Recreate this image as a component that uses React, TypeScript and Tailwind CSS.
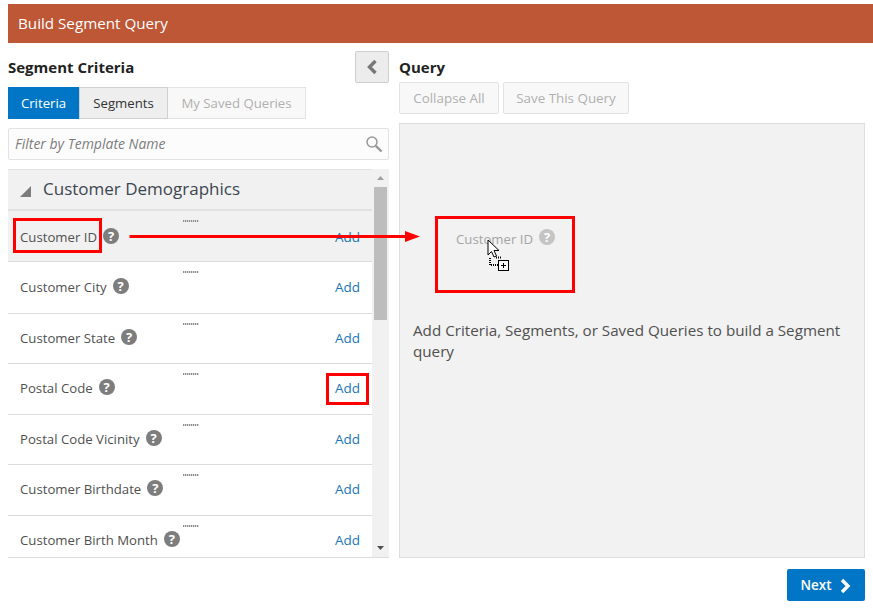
import React from "react";

function Help({ faded = false }: { faded?: boolean }) {
  return (
    <span
      className={`inline-flex h-4 w-4 items-center justify-center rounded-full text-[13px] font-bold leading-none text-white ${
        faded ? "bg-[#c4c4c4]" : "bg-[#7d7d7d]"
      }`}
    >
      ?
    </span>
  );
}

const rows: { name: string; h: string; mt: string; first?: boolean }[] = [
  { name: "Customer ID", h: "h-[51px]", mt: "mt-[16px]", first: true },
  { name: "Customer City", h: "h-[52px]", mt: "mt-[15px]" },
  { name: "Customer State", h: "h-[50px]", mt: "mt-[14px]" },
  { name: "Postal Code", h: "h-[51px]", mt: "mt-[14px]" },
  { name: "Postal Code Vicinity", h: "h-[50px]", mt: "mt-[14px]" },
  { name: "Customer Birthdate", h: "h-[51px]", mt: "mt-[14px]" },
  { name: "Customer Birth Month", h: "h-[42px]", mt: "mt-[14px]" },
];

function Row({ name, h, mt, first, last }: { name: string; h: string; mt: string; first?: boolean; last: boolean }) {
  return (
    <div
      className={`relative flex ${h} shrink-0 items-start pl-3 pr-3 ${last ? "" : "border-b border-[#dcdcdc]"} ${
        first ? "bg-[#f1f1f1]" : "bg-white"
      }`}
    >
      <div className="absolute left-[175px] top-[9px] h-[2px] w-4 bg-[repeating-linear-gradient(90deg,#8f8f8f_0_1px,#d8d8d8_1px_2px)]" />
      <div className={`${mt} flex items-center gap-[6px] text-[13.2px] leading-[20px] text-[#505050]`}>
        <span>{name}</span>
        <span className="-mt-[2px] flex">
          <Help />
        </span>
      </div>
      <a className={`ml-auto ${mt} text-[13.5px] leading-[20px] text-[#1b75b5]`}>Add</a>
    </div>
  );
}

function RedBox({ className }: { className: string }) {
  return <div className={`pointer-events-none absolute border-[3px] border-[#ff0000] ${className}`} />;
}

export default function App() {
  return (
    <div
      className="relative h-[613px] w-[873px] overflow-hidden bg-white pl-2 pt-1"
      style={{ fontFamily: '"Open Sans", "Noto Sans", sans-serif' }}
    >
      <div className="flex h-[39px] items-center bg-[#bd5736] pl-[10px] text-[15.2px] text-white">Build Segment Query</div>

      <div className="flex">
        {/* Left column */}
        <div className="w-[381px] shrink-0">
          <div className="mt-2 flex h-8 items-start justify-between">
            <div className="mt-[6px] text-[15px] font-bold leading-5 text-[#222]">Segment Criteria</div>
            <button className="flex h-8 w-[34px] items-center justify-center rounded-[2px] border border-[#cfcfcf] bg-[#ececec]">
              <svg width="12" height="16" viewBox="0 0 12 16">
                <path d="M9.5 2 L3.5 8 L9.5 14" fill="none" stroke="#777" strokeWidth="3.4" />
              </svg>
            </button>
          </div>

          <div className="mt-1 flex h-8 text-[13.2px]">
            <div className="flex w-[71px] items-center justify-center bg-[#0276c6] pt-[1px] text-white">Criteria</div>
            <div className="flex w-[89px] items-center justify-center border border-[#d0d0d0] bg-[#eeeeee] pt-[1px] text-[#333]">Segments</div>
            <div className="flex w-[138px] items-center justify-center border border-l-0 border-[#e4e4e4] bg-[#f8f8f8] pt-[1px] text-[#b0b0b0]">My Saved Queries</div>
          </div>

          <div className="mt-[9px] flex h-8 items-center justify-between rounded-[2px] border border-[#e2e2e2] bg-[#fcfcfc] pl-[6px] pr-[5px]">
            <span className="-mt-[2px] text-[14px] italic text-[#7d7d7d]">Filter by Template Name</span>
            <svg width="18" height="18" viewBox="0 0 18 18">
              <circle cx="7" cy="7" r="5" fill="none" stroke="#999" strokeWidth="1.5" />
              <path d="M10.8 10.8 L16.5 16.5" stroke="#999" strokeWidth="2.4" />
            </svg>
          </div>

          <div className="mt-[9px] flex h-[389px] overflow-hidden border-b border-[#dcdcdc]">
            <div className="flex w-[364px] shrink-0 flex-col">
              <div className="flex h-[42px] shrink-0 items-center border-b-2 border-t border-[#e2e2e2] bg-[#f1f1f1] pl-3">
                <svg width="11" height="11" viewBox="0 0 11 11" className="mt-1">
                  <path d="M11 0 V11 H0 Z" fill="#7c7c7c" />
                </svg>
                <span className="-mt-[2px] ml-3 text-[17px] text-[#3c4650]">Customer Demographics</span>
              </div>
              {rows.map((r, i) => (
                <Row key={r.name} name={r.name} h={r.h} mt={r.mt} first={r.first} last={i === rows.length - 1} />
              ))}
            </div>
            <div className="flex w-[17px] shrink-0 flex-col items-center bg-[#f1f1f1]">
              <svg width="9" height="18" viewBox="0 0 9 18" className="shrink-0">
                <path d="M4.5 7 L8 11 H1 Z" fill="#a0a0a0" />
              </svg>
              <div className="h-[133px] w-[13px] bg-[#bdbdbd]" />
              <div className="flex-1" />
              <svg width="9" height="18" viewBox="0 0 9 18" className="shrink-0">
                <path d="M1 7 H8 L4.5 11 Z" fill="#505050" />
              </svg>
            </div>
          </div>
        </div>

        {/* Right column */}
        <div className="ml-[10px] w-[466px] shrink-0">
          <div className="mt-[14px] text-[15px] font-bold leading-5 text-[#222]">Query</div>
          <div className="mt-[5px] flex h-8 gap-1 text-[13.4px] text-[#b0b0b0]">
            <div className="flex w-[100px] items-center justify-center rounded-[2px] border border-[#e2e2e2] bg-[#f8f8f8]">Collapse All</div>
            <div className="flex w-[126px] items-center justify-center rounded-[2px] border border-[#e2e2e2] bg-[#f8f8f8]">Save This Query</div>
          </div>
          <div className="mt-[9px] h-[435px] border border-[#dedede] bg-[#f2f2f2] pl-[13px] pt-[196px] text-[15.2px] leading-[21px] text-[#505050]">
            Add Criteria, Segments, or Saved Queries to build a Segment query
          </div>
        </div>
      </div>

      <div className="mr-2 mt-[11px] flex justify-end">
        <button className="flex h-8 w-[78px] items-center justify-center gap-[7px] rounded-[2px] bg-[#0276c6] pt-[1px] text-[13.5px] font-semibold text-white">
          Next
          <svg width="13" height="16" viewBox="0 0 13 16">
            <path d="M3 2 L9 8 L3 14" fill="none" stroke="#fff" strokeWidth="3.4" />
          </svg>
        </button>
      </div>

      {/* Annotations */}
      <RedBox className="left-[13px] top-[218px] h-[35px] w-[89px]" />
      <RedBox className="left-[326px] top-[373px] h-[32px] w-[43px]" />
      <RedBox className="left-[435px] top-[216px] h-[77px] w-[140px]" />
      <svg className="pointer-events-none absolute left-[125px] top-[225px]" width="300" height="24" viewBox="0 0 300 24">
        <path d="M4.5 11.5 H282" stroke="#ff0000" strokeWidth="3" />
        <path d="M280 6 L295 11.5 L280 17 Z" fill="#ff0000" />
      </svg>

      <div className="absolute left-[456px] top-[229px] flex items-center gap-[6px] text-[13.2px] leading-[20px] text-[#a5a5a5]">
        <span>Customer ID</span>
        <span className="-mt-1 flex">
          <Help faded />
        </span>
      </div>
      <svg className="pointer-events-none absolute left-[486px] top-[238px]" width="26" height="34" viewBox="0 0 26 34">
        <path d="M2 2 V17 L5.5 13.5 L8 19 L10.5 18 L8 12.5 H13 Z" fill="#fff" stroke="#000" strokeWidth="1" />
        <path d="M4 20 V27 H12 M10 19.5 H15" fill="none" stroke="#000" strokeWidth="2" strokeDasharray="1 1" />
        <rect x="12.5" y="22.5" width="10" height="10" fill="#fff" stroke="#000" />
        <path d="M15 27.5 H20 M17.5 25 V30" stroke="#000" />
      </svg>
    </div>
  );
}
